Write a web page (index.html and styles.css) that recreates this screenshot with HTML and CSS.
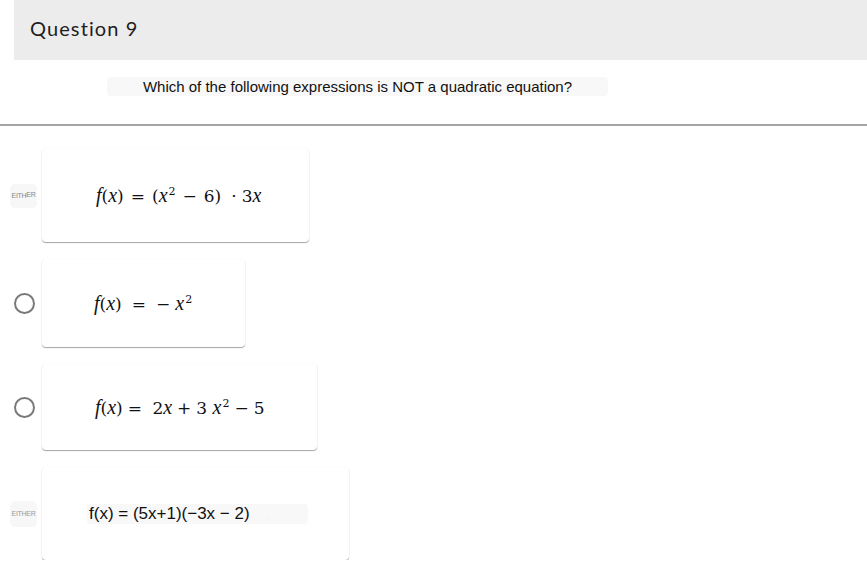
FILE: index.html
```html
<!DOCTYPE html>
<html lang="en">
<head>
  <meta charset="UTF-8" />
  <title>Question 9</title>
  <link rel="stylesheet" href="styles.css">
</head>
<body>

  <header class="q-header">
    <div class="q-title">Question 9</div>
  </header>

  <div class="prompt-area">
    <div class="prompt">Which of the following expressions is NOT a quadratic equation?</div>
  </div>

  <div class="options">

    <div class="option">
      <div class="marker">
        <div class="either">EITH<span class="up">ER</span></div>
      </div>
      <div class="card card-a">
        <span class="math">
          <i>f</i>(<i>x</i>)<span class="op">=</span>(<i>x</i><sup>2</sup><span class="op">−</span>6)<span class="dot">·</span>3<i>x</i>
        </span>
      </div>
    </div>

    <div class="option">
      <div class="marker">
        <div class="radio"></div>
      </div>
      <div class="card card-b">
        <span class="math">
          <i>f</i>(<i>x</i>)<span class="op">=</span><span class="op neg">−</span><i>x</i><sup>2</sup>
        </span>
      </div>
    </div>

    <div class="option">
      <div class="marker">
        <div class="radio"></div>
      </div>
      <div class="card card-c">
        <span class="math">
          <i>f</i>(<i>x</i>)<span class="op">=</span> 2<i>x</i><span class="op">+</span>3 <i>x</i><sup>2</sup><span class="op">−</span>5
        </span>
      </div>
    </div>

    <div class="option">
      <div class="marker">
        <div class="either either-sm">EITHER</div>
      </div>
      <div class="card card-d">
        <span class="plain">f(x) = (5x+1)(−3x − 2)<span class="speck">.</span></span>
      </div>
    </div>

  </div>

</body>
</html>
```

FILE: styles.css
```css
body {
  margin: 0;
  font-family: 'Liberation Sans', Arial, sans-serif;
  background: #ffffff;
  color: #222;
}

.q-header {
  margin-left: 14px;
  height: 60px;
  background-color: #ececec;
  display: flex;
  align-items: center;
  padding-left: 16px;
}

.q-title {
  font-family: Lato, 'Open Sans', sans-serif;
  font-size: 20px;
  letter-spacing: 1.1px;
  color: #1e1e1e;
  margin-top: -4px;
}

.prompt-area {
  height: 66px;
  border-bottom: 2px solid #a5a5a5;
  padding-top: 17px;
  box-sizing: border-box;
}

.prompt {
  margin-left: 107px;
  width: 501px;
  height: 19px;
  line-height: 19px;
  background: #f8f8f8;
  border-radius: 4px;
  text-align: center;
  font-size: 15px;
  color: #111;
}

.options {
  padding-top: 23px;
  display: flex;
  flex-direction: column;
  gap: 17px;
}

.option {
  display: flex;
  align-items: center;
}

.marker {
  width: 42px;
  display: flex;
  align-items: center;
}

.radio {
  margin-left: 14px;
  width: 17px;
  height: 17px;
  border: 2px solid #7a7a7a;
  border-radius: 50%;
}

.either {
  margin-left: 10px;
  width: 27px;
  height: 24px;
  border-radius: 5px;
  background: #f7f7f7;
  font-size: 7px;
  color: #888;
  display: flex;
  align-items: center;
  justify-content: center;
  letter-spacing: -0.3px;
}

.either .up {
  position: relative;
  top: -1px;
}

.either-sm {
  height: 26px;
  color: #9a9a9a;
}

.card {
  background: #fff;
  border-radius: 4px;
  box-shadow: 0 1px 1px rgba(0, 0, 0, 0.35), 0 0 2px rgba(0, 0, 0, 0.06);
  display: flex;
  align-items: center;
  box-sizing: border-box;
}

.card-a { width: 267px; height: 93px; padding-left: 54px; }
.card-b { width: 203px; height: 88px; padding-left: 52px; }
.card-c { width: 275px; height: 86px; padding-left: 53px; }
.card-d { width: 307px; height: 93px; padding-left: 45px; }

.math {
  font-family: 'DejaVu Serif', 'Liberation Serif', serif;
  font-size: 17px;
  color: #111;
  white-space: nowrap;
}

.math i {
  font-family: 'Liberation Serif', serif;
  font-style: italic;
  font-size: 20px;
}

.math sup {
  font-size: 11px;
  vertical-align: 7px;
  line-height: 0;
  margin-left: 1px;
}

.op {
  margin: 0 5px;
}

.card-a .op {
  margin: 0 7px;
}

.card-b .op {
  margin: 0 10px;
}

.card-b .neg {
  margin-left: 0;
  margin-right: 5px;
}

.dot {
  margin: 0 5px 0 10px;
}

.plain {
  display: inline-block;
  width: 219px;
  height: 20px;
  line-height: 20px;
  padding-left: 2px;
  background: #f8f8f8;
  border-radius: 4px;
  font-size: 17px;
  color: #111;
  white-space: nowrap;
}

.speck {
  margin-left: 16px;
  color: #ddd;
  font-size: 8px;
}
```
